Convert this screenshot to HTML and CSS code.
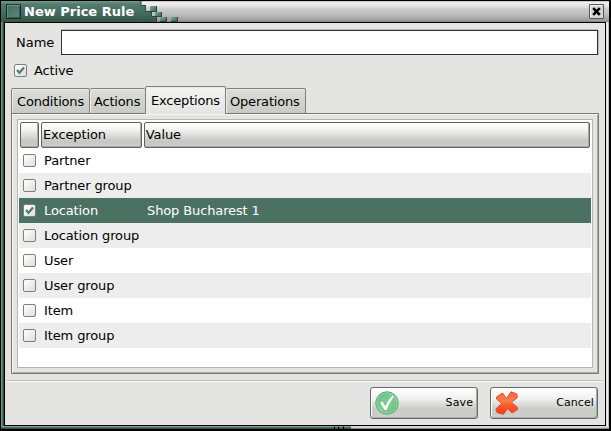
FILE: index.html
```html
<!DOCTYPE html>
<html lang="en">
<head>
<meta charset="utf-8">
<title>New Price Rule</title>
<link rel="stylesheet" href="styles.css">
</head>
<body>
<div class="window">
  <header class="titlebar">
    <div class="caption"><i class="menu-box"></i><span class="title">New Price Rule</span></div>
    <svg class="blocks" width="50" height="21" viewBox="0 0 50 21">
      <defs><linearGradient id="b" x1="0" y1="0" x2="1" y2="1"><stop offset="0" stop-color="#80aa99"/><stop offset="1" stop-color="#3d6858"/></linearGradient>
      <linearGradient id="g" gradientUnits="userSpaceOnUse" x1="0" y1="0" x2="0" y2="21"><stop offset="0" stop-color="#749b8c"/><stop offset=".15" stop-color="#547d6f"/><stop offset=".6" stop-color="#466b5e"/><stop offset="1" stop-color="#345548"/></linearGradient></defs>
      <path d="M0 0H1V4H6V10H12V15H17V21H0Z" fill="url(#g)"/>
      <path d="M1 0V4.500H5.500V10.500H11.500V15.500H16.500V21" fill="none" stroke="#2c483d"/>
      <g fill="#2c4a3e"><rect x="10" y="5" width="7" height="6"/><rect x="15" y="11" width="7" height="5"/><rect x="20" y="16" width="7" height="5"/><rect x="31" y="16" width="7" height="5"/></g>
      <g fill="url(#b)"><rect x="10" y="5" width="6" height="5"/><rect x="15" y="11" width="6" height="4"/><rect x="20" y="16" width="6" height="4"/><rect x="31" y="16" width="6" height="4"/></g>
    </svg>
    <svg class="close" width="15" height="15" viewBox="0 0 15 15"><path d="M.5 14.500V.5H14.500" fill="none" stroke="#555"/><path d="M1 14.500H14.500V1" fill="none" stroke="#555"/><path d="M1.500 13V1.500H13" fill="none" stroke="#f4f4f4"/><path d="M4.200 4.200l6.600 6.600M10.800 4.200l-6.600 6.600" stroke="#000" stroke-width="2.600"/></svg>
  </header>
  <main class="content">
    <div class="name-row"><label for="name">Name</label><input id="name" type="text"></div>
    <div class="active-row"><span class="check"><svg viewBox="0 0 11 11"><path d="M2 5L4.500 7.800L9 2.500" /></svg></span><span>Active</span></div>
    <nav class="tabs">
      <div class="tab t1">Conditions</div><div class="tab t2">Actions</div><div class="tab t3 current">Exceptions</div><div class="tab t4">Operations</div>
    </nav>
    <section class="panel">
      <div class="tree">
        <div class="head"><b></b><b>Exception</b><b>Value</b></div>
        <div class="row"><span class="check"></span><span>Partner</span></div>
        <div class="row"><span class="check"></span><span>Partner group</span></div>
        <div class="row selected"><span class="check"><svg viewBox="0 0 11 11"><path d="M2 5L4.500 7.800L9 2.500" /></svg></span><span>Location</span><span>Shop Bucharest 1</span></div>
        <div class="row"><span class="check"></span><span>Location group</span></div>
        <div class="row"><span class="check"></span><span>User</span></div>
        <div class="row"><span class="check"></span><span>User group</span></div>
        <div class="row"><span class="check"></span><span>Item</span></div>
        <div class="row"><span class="check"></span><span>Item group</span></div>
      </div>
    </section>
    <hr>
    <footer class="actions">
      <div class="button save"><svg width="24" height="24" viewBox="0 0 24 24"><defs><linearGradient id="ok" x1="0" y1="0" x2="1" y2="1"><stop offset="0" stop-color="#55b982"/><stop offset=".5" stop-color="#85cd99"/><stop offset="1" stop-color="#65b96c"/></linearGradient></defs><circle cx="12" cy="12" r="11.200" fill="url(#ok)" stroke="#4cac70"/><circle cx="12" cy="12" r="10.200" fill="none" stroke="#a0dcb0" stroke-width=".8"/><path d="M5 11.500L7.500 10.500L10.300 15.500Q13 9.500 17.500 4.500L18.700 5.500Q14 12 11.500 19H9.700Z" fill="#fff"/></svg><span>Save</span></div>
      <div class="button"><svg width="24" height="24" viewBox="0 0 24 24"><defs><linearGradient id="no" x1="0" y1="0" x2="0" y2="1"><stop offset="0" stop-color="#ff6038"/><stop offset=".4" stop-color="#ff7c4c"/><stop offset=".6" stop-color="#ff5a2c"/><stop offset="1" stop-color="#fa3a12"/></linearGradient></defs><path d="M1.500 6L7.500 2L11.500 7.500L16 .8L21.800 3L22.300 6.500L16.500 11.500L22.500 16.500V18.500L17 22L12.500 17.500L8.500 23.300L2 21.500L.8 18L7 12.500L1.500 8Z" fill="url(#no)" stroke="#cf5030" stroke-linejoin="round"/></svg><span>Cancel</span></div>
    </footer>
  </main>
  <div class="grip"></div>
</div>
</body>
</html>
```
FILE: styles.css
```css
* { box-sizing: border-box; }
body { margin: 0; background: #000; color: #000; font: 13px/16px "DejaVu Sans", sans-serif; letter-spacing: -0.12px; }
.window {
  position: relative; width: 609px; height: 429px; padding: 0 3px 3px; border: 1px solid #000; border-width: 1px 0 0 1px;
  background: linear-gradient(90deg, #6f9988 0 1px, #4b7465 1px 2px, #2e4f42 2px 3px, #ddd 3px 606px, #eee 606px 607px, #bbb 607px);
}
.titlebar {
  display: flex; height: 21px; margin: 0 -3px;
  background: linear-gradient(#aaa 0, #f1ecf0 1px, #eee9ed 4px, #ccc 8px, #bbb 14px, #989898 20px, #777 21px);
}
.caption { display: flex; width: 139px; padding: 3px 0 0 5px; background: linear-gradient(#749b8c, #547d6f 3px, #466b5e 12px, #345548); }
.menu-box { width: 15px; height: 15px; border: 1px solid #192e26; border-top-color: #263d34; background: linear-gradient(135deg, #42695b, #5d8c7c); box-shadow: inset 1px 1px #66907f, inset -1px -1px #37594d; }
.title { margin-left: 3px; color: #fff; font-weight: bold; letter-spacing: 0; white-space: nowrap; position: relative; z-index: 1; }
.close { margin: 3px 5px 0 auto; background: #d5d5d5; }
.content { width: 602px; height: 404px; border: 1px solid #000; background: #e4e4e2; padding: 7px 6px 0; }
.name-row { display: flex; align-items: center; height: 25px; }
.name-row label { width: 50px; padding-left: 5px; letter-spacing: 0; }
.name-row input { width: 537px; height: 25px; margin: 0; padding: 2px 4px; border: 1px solid #30323b; border-radius: 0; outline: 0; background: #fff; box-shadow: 0 -1px #b9b9b5, 1px 0 #b9b9b5; font: inherit; }
.active-row { display: flex; align-items: center; gap: 7px; padding-left: 3px; height: 16px; margin-top: 8px; }
.active-row .check { margin-top: -1px; }
.check { display: block; flex: none; width: 13px; height: 13px; border: 1px solid #7c7f7a; border-radius: 2px; background: linear-gradient(135deg, #fff, #dededc); }
.check svg { display: block; width: 11px; height: 11px; }
.check path { fill: none; stroke: #527c6c; stroke-width: 2.2; }
.tabs { display: flex; align-items: flex-end; height: 27px; margin-top: 7px; }
.tab { height: 25px; border: 1px solid #7d807a; border-bottom: 0; border-radius: 2px 2px 0 0; background: linear-gradient(#dcddda, #c8cbc5); box-shadow: inset 1px 1px #ebecea; padding: 5px 0 0 5px; white-space: nowrap; letter-spacing: -0.18px; }
.t1 { width: 79px; } .t2 { width: 55px; border-left: 0; padding-left: 4px; border-right: 0; } .t4 { width: 80px; border-left: 0; padding-left: 4px; }
.current { width: 81px; height: 28px; margin-bottom: -1px; padding-top: 6px; background: linear-gradient(#f3f3f2, #e4e4e2); position: relative; }
.panel { width: 588px; height: 261px; border: 1px solid #777a74; box-shadow: inset 1px 1px #f5f5f3, inset -1px -1px #aaa; padding: 5px; }
.tree { height: 249px; border: 1px solid #b5b5b1; background: #fff; padding: 2px 1px 0; }
.head { display: flex; gap: 2px; height: 26px; padding: 0 1px; }
.head b { width: 19px; height: 26px; border: 1px solid #5f625d; border-radius: 2px; background: linear-gradient(#fff, #f4f4f3 25%, #c6c9c2 75%, #cbcdc8); font-weight: normal; padding: 4px 0 0 1px; box-shadow: inset -1px -1px #a9aba6; }
.head b:nth-child(2) { width: 101px; }
.head b:nth-child(3) { width: 447px; }
.row { display: grid; grid-template-columns: 21px 103px 1fr; align-items: center; height: 25px; padding-left: 4px; }
.row:nth-child(odd) { background: #ededed; }
.row.selected { background: #4b7163; color: #fff; }
hr { height: 2px; margin: 6px -4px 0; border: 0; border-top: 1px solid #bbbbb7; background: #fff; }
.actions { display: flex; justify-content: flex-end; gap: 12px; padding: 5px 1px 0 0; }
.button { display: flex; align-items: center; justify-content: space-between; width: 108px; height: 32px; padding: 0 3px 0 4px; border: 1px solid #666964; border-radius: 3px; background: linear-gradient(#fff, #f1f1f0 35%, #c9ccc6 70%, #cdcfca); box-shadow: inset -1px -1px #a9aba6, inset 1px 1px #fff; font-size: 11px; letter-spacing: 0.1px; }
.button.save { padding-right: 4px; }
.grip { position: absolute; left: 0; top: 425px; width: 608px; height: 3px; background: linear-gradient(rgba(255,255,255,.3) 1px, transparent 1px 2px, rgba(0,0,0,.3) 2px), linear-gradient(90deg, #4b7465 333px, #000 333px 334px, #4b7465 334px 337px, #000 337px 338px, #4b7465 338px 342px, #000 342px 343px, #4b7465 343px 350px, #ccc 350px); }
```
